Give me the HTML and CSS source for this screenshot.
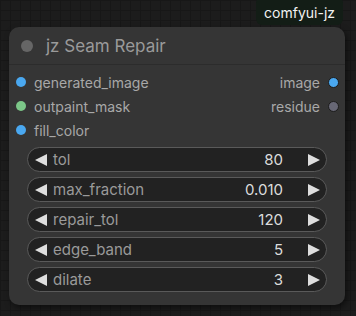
FILE: index.html
```html
<!DOCTYPE html>
<html lang="en">
<head>
  <meta charset="UTF-8">
  <title>jz Seam Repair</title>
  <link rel="stylesheet" href="styles.css">
</head>
<body>
  <div class="badge-row">
    <div class="badge">comfyui-jz</div>
  </div>

  <div class="node">
    <div class="title">
      <span class="title-dot"></span>
      <span class="title-text">jz Seam Repair</span>
    </div>

    <div class="slots">
      <div class="slot-row">
        <div class="slot in"><span class="dot image"></span>generated_image</div>
        <div class="slot out">image<span class="dot image ring"></span></div>
      </div>
      <div class="slot-row">
        <div class="slot in"><span class="dot mask"></span>outpaint_mask</div>
        <div class="slot out">residue<span class="dot other ring"></span></div>
      </div>
      <div class="slot-row">
        <div class="slot in"><span class="dot image"></span>fill_color</div>
      </div>
    </div>

    <div class="widgets">
      <div class="widget"><span class="arrow left"></span><span class="w-label">tol</span><span class="w-value">80</span><span class="arrow right"></span></div>
      <div class="widget"><span class="arrow left"></span><span class="w-label">max_fraction</span><span class="w-value">0.010</span><span class="arrow right"></span></div>
      <div class="widget"><span class="arrow left"></span><span class="w-label">repair_tol</span><span class="w-value">120</span><span class="arrow right"></span></div>
      <div class="widget"><span class="arrow left"></span><span class="w-label">edge_band</span><span class="w-value">5</span><span class="arrow right"></span></div>
      <div class="widget"><span class="arrow left"></span><span class="w-label">dilate</span><span class="w-value">3</span><span class="arrow right"></span></div>
    </div>
  </div>
</body>
</html>
```

FILE: styles.css
```css
html, body {
  margin: 0;
  height: 100%;
}
body {
  width: 356px;
  height: 316px;
  overflow: hidden;
  font-family: Inter, "Noto Sans", sans-serif;
  background-color: #1c1c1c;
  background-image:
    linear-gradient(to right, #171717 1px, transparent 1px),
    linear-gradient(to bottom, #171717 1px, transparent 1px);
  background-size: 10px 10px;
}
.badge-row {
  display: flex;
  justify-content: flex-end;
  padding-right: 13px;
}
.badge {
  line-height: 27px;
  margin-top: -3px;
  padding: 2px 8px 0;
  box-sizing: border-box;
  height: 28px;
  background: #131d16;
  color: #f2f2f2;
  font-size: 14px;
  border-radius: 6px;
}
.node {
  width: 336px;
  height: 278px;
  margin: 2px 0 0 9px;
  background: #353535;
  border-radius: 10px;
  box-shadow: 2px 3px 6px rgba(0, 0, 0, 0.5);
  box-sizing: border-box;
}
.title {
  height: 38px;
  display: flex;
  align-items: center;
  padding-left: 12px;
  border-bottom: 1px solid #2c2c2c;
  box-sizing: border-box;
}
.title-dot {
  width: 12px;
  height: 12px;
  border-radius: 50%;
  background: #666;
  margin-right: 13px;
}
.title-text {
  color: #9a9a9a;
  font-size: 17px;
}
.slots {
  padding-top: 5px;
}
.slot-row {
  height: 24px;
  display: flex;
  justify-content: space-between;
  align-items: center;
}
.slot {
  display: flex;
  align-items: center;
  color: #a8a8a8;
  font-size: 14px;
}
.slot.in {
  padding-left: 7px;
}
.slot.in .dot {
  margin-right: 8px;
}
.slot.out {
  padding-right: 6px;
}
.slot.out .dot {
  margin-left: 8px;
}
.dot {
  width: 10px;
  height: 10px;
  border-radius: 50%;
  box-sizing: border-box;
}
.dot.ring {
  width: 11px;
  height: 11px;
  border: 1.5px solid #1c1c1c;
}
.dot.image { background: #4aa8f0; }
.dot.mask { background: #7cc788; }
.dot.other { background: #676775; }
.widgets {
  padding: 5px 18px 0;
  display: flex;
  flex-direction: column;
  gap: 5px;
}
.widget {
  height: 25px;
  box-sizing: border-box;
  border: 1px solid #5a5a5a;
  border-radius: 13px;
  background: #222;
  display: flex;
  align-items: center;
  padding: 0 6px 0 7px;
  font-size: 15px;
}
.arrow {
  width: 0;
  height: 0;
  border-top: 6.5px solid transparent;
  border-bottom: 6.5px solid transparent;
}
.arrow.left {
  border-right: 12px solid #dedede;
  margin-right: 6px;
}
.arrow.right {
  border-left: 12px solid #dedede;
  margin-left: 25px;
}
.w-label {
  color: #9a9a9a;
  flex: 1;
}
.w-value {
  color: #dcdcdc;
}
```
